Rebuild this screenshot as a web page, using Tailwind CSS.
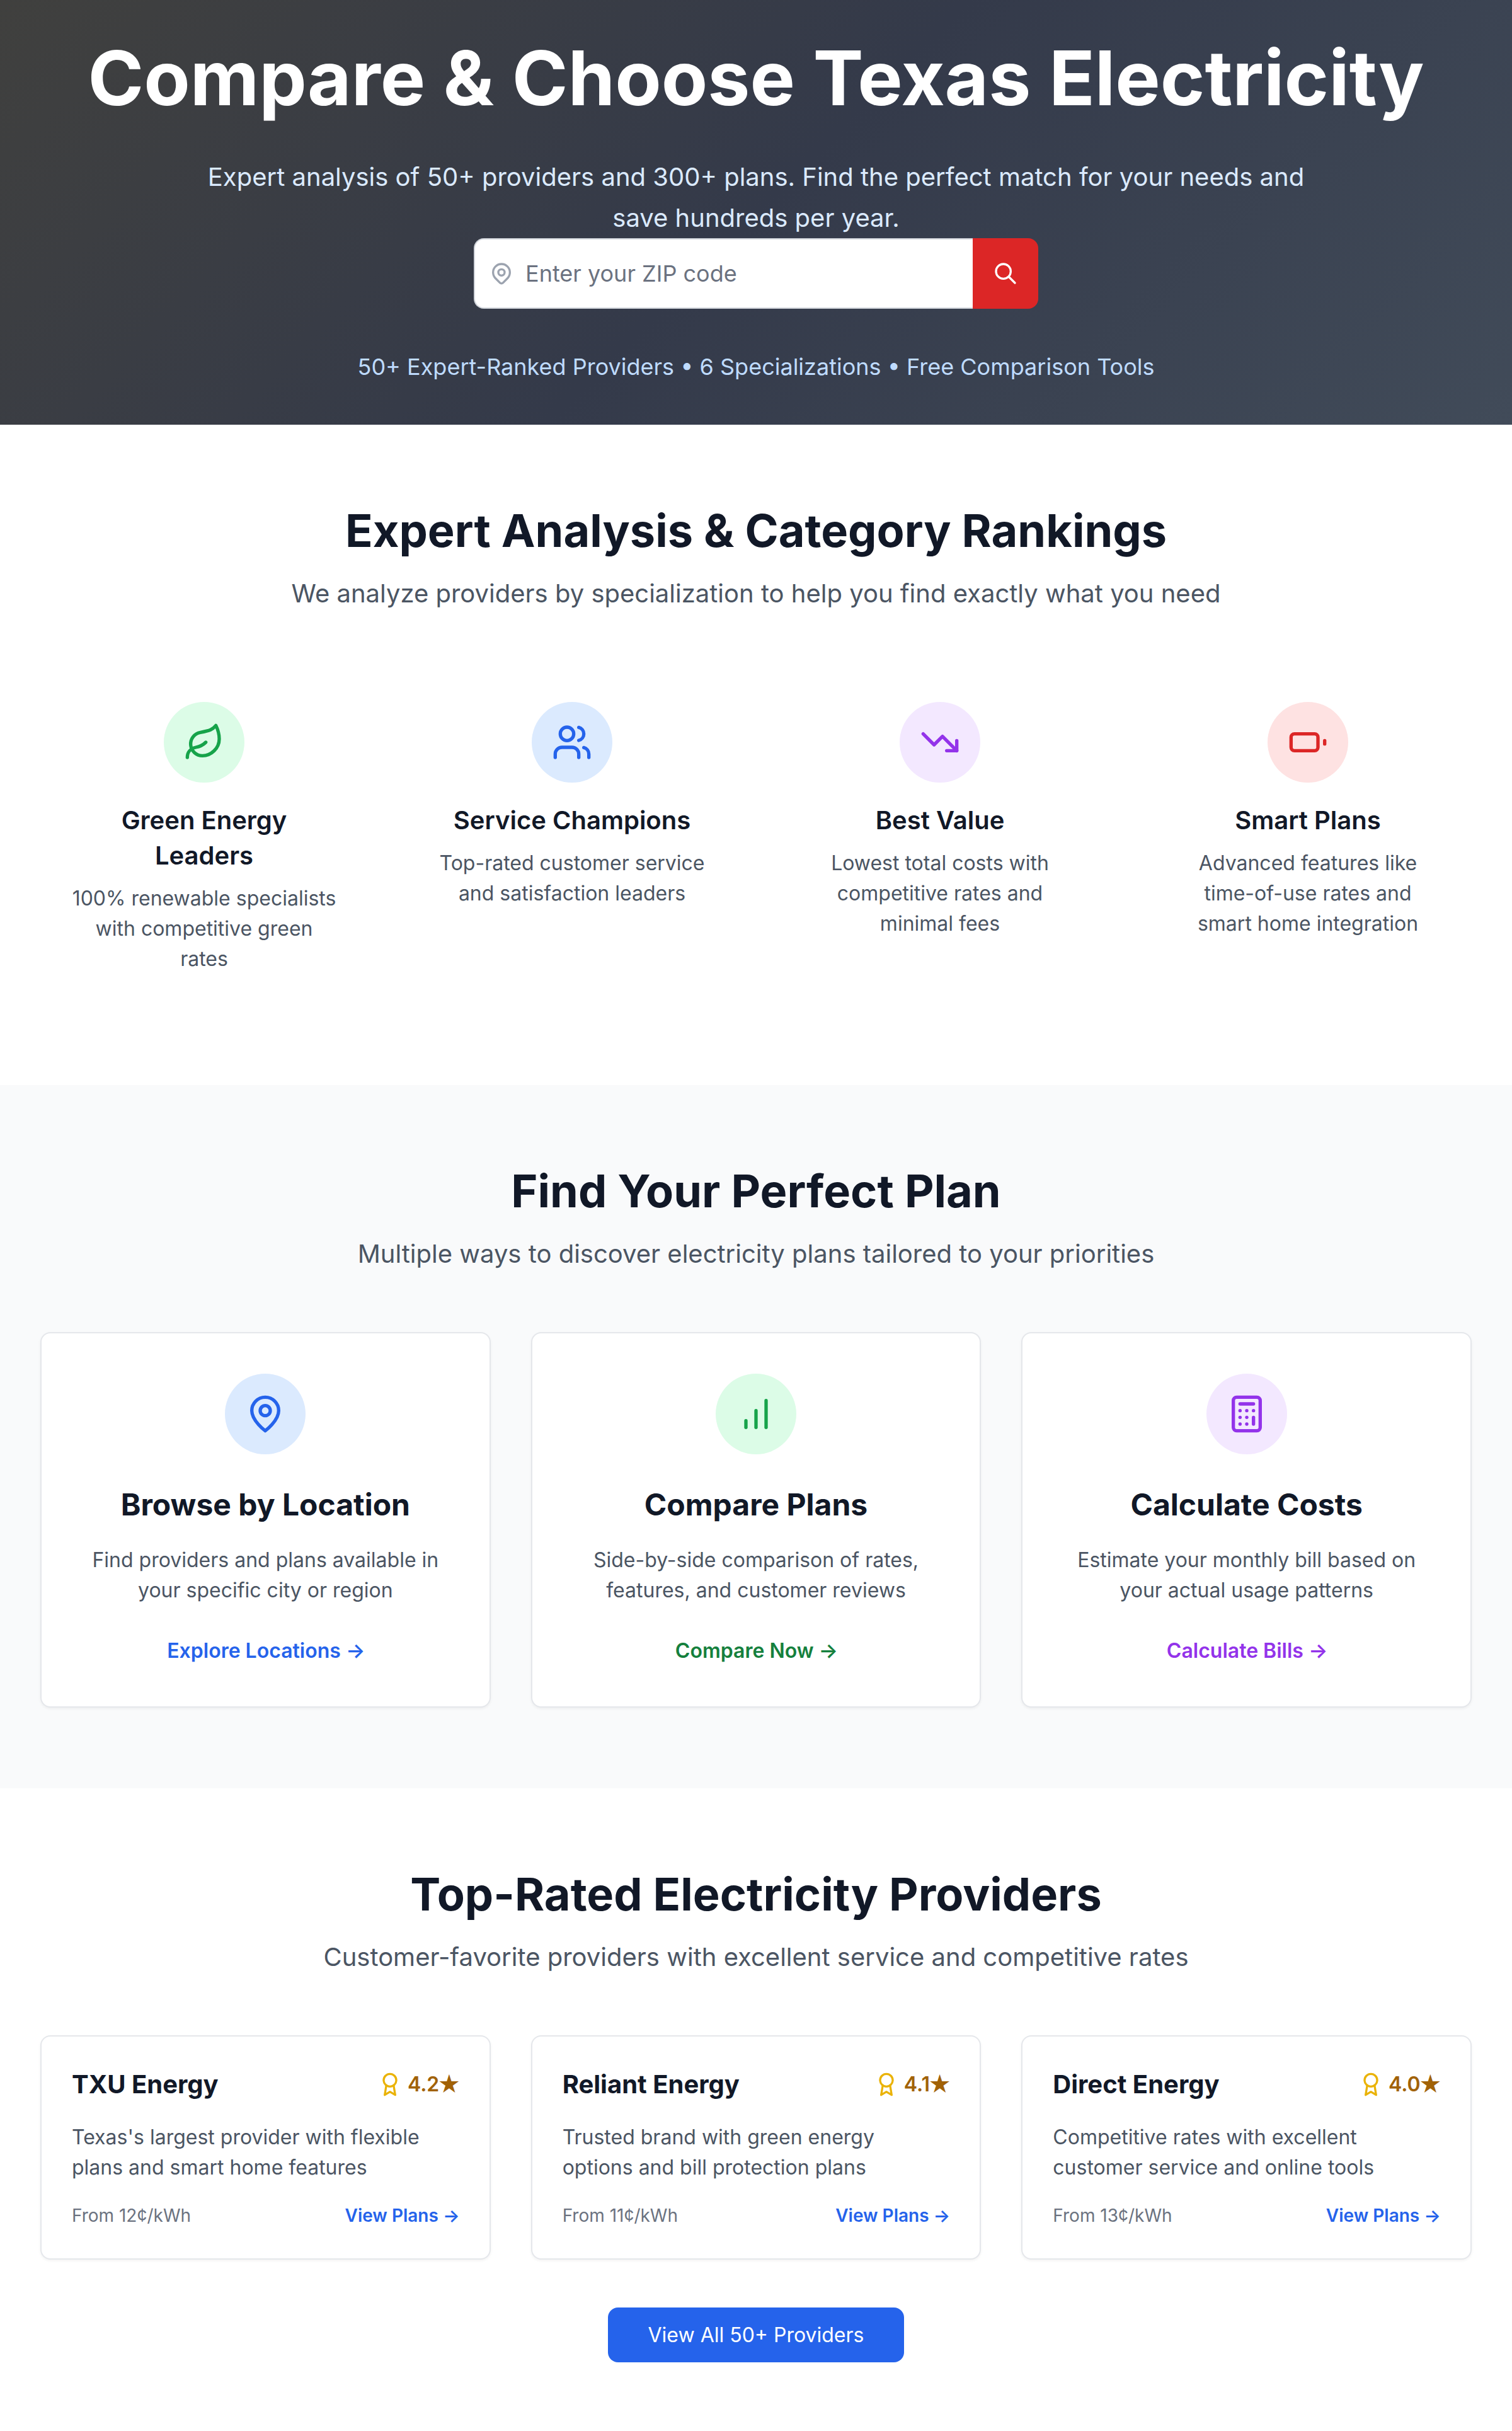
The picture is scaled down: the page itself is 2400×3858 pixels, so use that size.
<!DOCTYPE html>
<html lang="en">
<head>
<meta charset="utf-8">
<title>Compare Texas Electricity</title>
<script src="https://cdn.jsdelivr.net/npm/@tailwindcss/browser@4"></script>
</head>
<body class="bg-white font-['Inter',sans-serif] text-[32px] leading-[48px] text-gray-900">
<svg class="hidden">
  <defs>
    <symbol id="award" viewBox="0 0 24 24" fill="none" stroke="currentColor" stroke-width="2" stroke-linecap="round" stroke-linejoin="round"><circle cx="12" cy="8" r="6"/><path d="M15.477 12.89 17 22l-5-3-5 3 1.523-9.11"/></symbol>
  </defs>
</svg>

<section class="bg-[linear-gradient(135deg,#40403e,#343a4a_50%,#414b59)] px-16 py-16 text-center">
  <h1 class="text-[120px] leading-none font-bold text-white">Compare &amp; Choose Texas Electricity</h1>
  <p class="mx-auto mt-16 max-w-[1792px] text-[40px] leading-[65px] text-[#dbeafe]">Expert analysis of 50+ providers and 300+ plans. Find the perfect match for your needs and save hundreds per year.</p>
  <form class="mx-auto flex h-[112px] w-[896px]">
    <label class="flex flex-1 items-center gap-[18px] rounded-l-2xl border-2 border-r-0 border-[#d1d5db] bg-white pl-[22px]">
      <svg class="size-10 shrink-0 text-[#9ca3af]" viewBox="0 0 24 24" fill="none" stroke="currentColor" stroke-width="2" stroke-linecap="round" stroke-linejoin="round"><path d="M17.657 16.657L13.414 20.9a1.998 1.998 0 01-2.827 0l-4.244-4.243a8 8 0 1111.314 0z"/><path d="M15 11a3 3 0 11-6 0 3 3 0 016 0z"/></svg>
      <input type="text" placeholder="Enter your ZIP code" class="min-w-0 flex-1 text-[36px] leading-[56px] placeholder:text-[#6b7280]">
    </label>
    <button type="button" aria-label="Search" class="flex w-[104px] items-center justify-center rounded-r-2xl bg-[#dc2626] text-white">
      <svg class="size-10" viewBox="0 0 24 24" fill="none" stroke="currentColor" stroke-width="2" stroke-linecap="round" stroke-linejoin="round"><path d="M21 21l-6-6m2-5a7 7 0 11-14 0 7 7 0 0114 0z"/></svg>
    </button>
  </form>
  <p class="mt-16 text-[36px] leading-[56px] text-[#bfdbfe]">50+ Expert-Ranked Providers • 6 Specializations • Free Comparison Tools</p>
</section>

<section class="px-16 py-32 text-center">
  <h2 class="text-[72px] leading-[80px] font-bold text-[#111827]">Expert Analysis &amp; Category Rankings</h2>
  <p class="mt-8 text-[40px] leading-[56px] text-[#4b5563]">We analyze providers by specialization to help you find exactly what you need</p>
  <div class="mt-24 grid grid-cols-4 gap-16">
    <div class="p-12">
      <div class="mx-auto flex size-32 items-center justify-center rounded-full bg-[#dcfce7] text-[#16a34a]">
        <svg class="size-16" viewBox="0 0 24 24" fill="none" stroke="currentColor" stroke-width="2" stroke-linecap="round" stroke-linejoin="round"><path d="M11 20A7 7 0 0 1 9.8 6.1C15.5 5 17 4.48 19 2c1 2 2 4.18 2 8 0 5.5-4.78 10-10 10Z"/><path d="M2 21c0-3 1.85-5.36 5.08-6C9.5 14.52 12 13 13 12"/></svg>
      </div>
      <h3 class="mt-8 text-[40px] leading-[56px] font-semibold text-[#111827]">Green Energy Leaders</h3>
      <p class="mt-4 text-[#4b5563]">100% renewable specialists with competitive green rates</p>
    </div>
    <div class="p-12">
      <div class="mx-auto flex size-32 items-center justify-center rounded-full bg-[#dbeafe] text-[#2563eb]">
        <svg class="size-16" viewBox="0 0 24 24" fill="none" stroke="currentColor" stroke-width="2" stroke-linecap="round" stroke-linejoin="round"><path d="M16 21v-2a4 4 0 0 0-4-4H6a4 4 0 0 0-4 4v2"/><circle cx="9" cy="7" r="4"/><path d="M22 21v-2a4 4 0 0 0-3-3.87"/><path d="M16 3.13a4 4 0 0 1 0 7.75"/></svg>
      </div>
      <h3 class="mt-8 text-[40px] leading-[56px] font-semibold text-[#111827]">Service Champions</h3>
      <p class="mt-4 text-[#4b5563]">Top-rated customer service and satisfaction leaders</p>
    </div>
    <div class="p-12">
      <div class="mx-auto flex size-32 items-center justify-center rounded-full bg-[#f3e8ff] text-[#9333ea]">
        <svg class="size-16" viewBox="0 0 24 24" fill="none" stroke="currentColor" stroke-width="2" stroke-linecap="round" stroke-linejoin="round"><polyline points="22 17 13.5 8.5 8.5 13.5 2 7"/><polyline points="16 17 22 17 22 11"/></svg>
      </div>
      <h3 class="mt-8 text-[40px] leading-[56px] font-semibold text-[#111827]">Best Value</h3>
      <p class="mt-4 text-[#4b5563]">Lowest total costs with competitive rates and minimal fees</p>
    </div>
    <div class="p-12">
      <div class="mx-auto flex size-32 items-center justify-center rounded-full bg-[#fee2e2] text-[#dc2626]">
        <svg class="size-16" viewBox="0 0 24 24" fill="none" stroke="currentColor" stroke-width="2" stroke-linecap="round" stroke-linejoin="round"><rect x="2" y="7" width="16" height="10" rx="2"/><path d="M22 11v2"/></svg>
      </div>
      <h3 class="mt-8 text-[40px] leading-[56px] font-semibold text-[#111827]">Smart Plans</h3>
      <p class="mt-4 text-[#4b5563]">Advanced features like time-of-use rates and smart home integration</p>
    </div>
  </div>
</section>

<section class="bg-[#f9fafb] px-16 py-32 text-center">
  <h2 class="text-[72px] leading-[80px] font-bold text-[#111827]">Find Your Perfect Plan</h2>
  <p class="mt-8 text-[40px] leading-[56px] text-[#4b5563]">Multiple ways to discover electricity plans tailored to your priorities</p>
  <div class="mt-24 grid grid-cols-3 gap-16">
    <div class="rounded-2xl border-2 border-[#e5e7eb] bg-white p-16 shadow-[0_2px_4px_rgba(0,0,0,0.05)]">
      <div class="mx-auto flex size-32 items-center justify-center rounded-full bg-[#dbeafe] text-[#2563eb]">
        <svg class="size-16" viewBox="0 0 24 24" fill="none" stroke="currentColor" stroke-width="2" stroke-linecap="round" stroke-linejoin="round"><path d="M20 10c0 6-8 12-8 12s-8-6-8-12a8 8 0 0 1 16 0Z"/><circle cx="12" cy="10" r="3"/></svg>
      </div>
      <h3 class="mt-12 text-[48px] leading-[64px] font-bold text-[#111827]">Browse by Location</h3>
      <p class="mt-8 text-[#4b5563]">Find providers and plans available in your specific city or region</p>
      <a class="mt-12 block pl-0.5 font-semibold text-[#2563eb]">Explore Locations →</a>
    </div>
    <div class="rounded-2xl border-2 border-[#e5e7eb] bg-white p-16 shadow-[0_2px_4px_rgba(0,0,0,0.05)]">
      <div class="mx-auto flex size-32 items-center justify-center rounded-full bg-[#dcfce7] text-[#16a34a]">
        <svg class="size-16" viewBox="0 0 24 24" fill="none" stroke="currentColor" stroke-width="2" stroke-linecap="round" stroke-linejoin="round"><path d="M12 20V10"/><path d="M18 20V4"/><path d="M6 20v-4"/></svg>
      </div>
      <h3 class="mt-12 text-[48px] leading-[64px] font-bold text-[#111827]">Compare Plans</h3>
      <p class="mt-8 text-[#4b5563]">Side-by-side comparison of rates, features, and customer reviews</p>
      <a class="mt-12 block pl-0.5 font-semibold text-[#15803d]">Compare Now →</a>
    </div>
    <div class="rounded-2xl border-2 border-[#e5e7eb] bg-white p-16 shadow-[0_2px_4px_rgba(0,0,0,0.05)]">
      <div class="mx-auto flex size-32 items-center justify-center rounded-full bg-[#f3e8ff] text-[#9333ea]">
        <svg class="size-16" viewBox="0 0 24 24" fill="none" stroke="currentColor" stroke-width="2" stroke-linecap="round" stroke-linejoin="round"><rect width="16" height="20" x="4" y="2" rx="2"/><path d="M8 6h8"/><path d="M16 14v4"/><path d="M16 10h.01"/><path d="M12 10h.01"/><path d="M8 10h.01"/><path d="M12 14h.01"/><path d="M8 14h.01"/><path d="M12 18h.01"/><path d="M8 18h.01"/></svg>
      </div>
      <h3 class="mt-12 text-[48px] leading-[64px] font-bold text-[#111827]">Calculate Costs</h3>
      <p class="mt-8 text-[#4b5563]">Estimate your monthly bill based on your actual usage patterns</p>
      <a class="mt-12 block pl-0.5 font-semibold text-[#9333ea]">Calculate Bills →</a>
    </div>
  </div>
</section>

<section class="px-16 py-32">
  <h2 class="text-center text-[72px] leading-[80px] font-bold text-[#111827]">Top-Rated Electricity Providers</h2>
  <p class="mt-8 text-center text-[40px] leading-[56px] text-[#4b5563]">Customer-favorite providers with excellent service and competitive rates</p>
  <div class="mt-24 grid grid-cols-3 gap-16">
    <div class="rounded-2xl border-2 border-[#e5e7eb] bg-white p-12 shadow-[0_2px_4px_rgba(0,0,0,0.05)]">
      <div class="flex items-center justify-between">
        <h3 class="text-[40px] leading-[56px] font-bold text-[#111827]">TXU Energy</h3>
        <div class="flex items-center gap-2"><svg class="size-10 text-[#eab308]"><use href="#award"/></svg><span class="font-semibold text-[#a16207]">4.2<span class="text-[30px] [-webkit-text-stroke:1.5px]">★</span></span></div>
      </div>
      <p class="mt-8 text-[#4b5563]">Texas's largest provider with flexible plans and smart home features</p>
      <div class="mt-8 flex items-center justify-between text-[28px] leading-[40px]">
        <span class="text-[#6b7280]">From 12¢/kWh</span>
        <a class="-mr-px font-semibold text-[#2563eb]">View Plans →</a>
      </div>
    </div>
    <div class="rounded-2xl border-2 border-[#e5e7eb] bg-white p-12 shadow-[0_2px_4px_rgba(0,0,0,0.05)]">
      <div class="flex items-center justify-between">
        <h3 class="text-[40px] leading-[56px] font-bold text-[#111827]">Reliant Energy</h3>
        <div class="flex items-center gap-2"><svg class="size-10 text-[#eab308]"><use href="#award"/></svg><span class="font-semibold text-[#a16207]">4.1<span class="text-[30px] [-webkit-text-stroke:1.5px]">★</span></span></div>
      </div>
      <p class="mt-8 text-[#4b5563]">Trusted brand with green energy options and bill protection plans</p>
      <div class="mt-8 flex items-center justify-between text-[28px] leading-[40px]">
        <span class="text-[#6b7280]">From 11¢/kWh</span>
        <a class="-mr-px font-semibold text-[#2563eb]">View Plans →</a>
      </div>
    </div>
    <div class="rounded-2xl border-2 border-[#e5e7eb] bg-white p-12 shadow-[0_2px_4px_rgba(0,0,0,0.05)]">
      <div class="flex items-center justify-between">
        <h3 class="text-[40px] leading-[56px] font-bold text-[#111827]">Direct Energy</h3>
        <div class="flex items-center gap-2"><svg class="size-10 text-[#eab308]"><use href="#award"/></svg><span class="font-semibold text-[#a16207]">4.0<span class="text-[30px] [-webkit-text-stroke:1.5px]">★</span></span></div>
      </div>
      <p class="mt-8 text-[#4b5563]">Competitive rates with excellent customer service and online tools</p>
      <div class="mt-8 flex items-center justify-between text-[28px] leading-[40px]">
        <span class="text-[#6b7280]">From 13¢/kWh</span>
        <a class="-mr-px font-semibold text-[#2563eb]">View Plans →</a>
      </div>
    </div>
  </div>
  <div class="mt-24 text-center">
    <a class="rounded-2xl bg-[#2563eb] px-16 py-6 text-white">View All 50+ Providers</a>
  </div>
</section>
</body>
</html>
